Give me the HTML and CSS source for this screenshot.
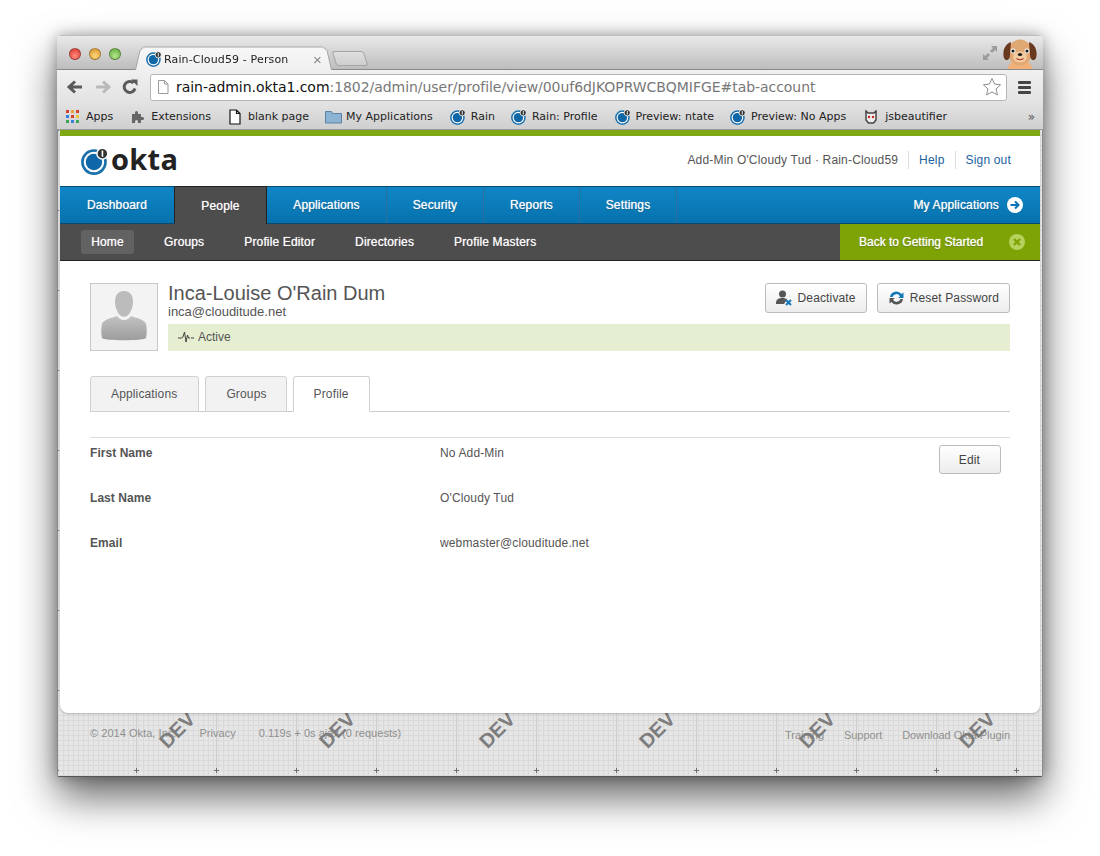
FILE: index.html
```html
<!DOCTYPE html>
<html lang="en">
<head>
    <meta charset="UTF-8">
    <title>Rain-Cloud59 - Person</title>
    <link rel="stylesheet" href="styles.css">
</head>
<body>
<svg class="defs" width="0" height="0">
    <symbol id="okta" viewBox="0 0 16 16">
        <circle cx="7.4" cy="8.600" r="6.600" fill="#fff" stroke="#1a70ad" stroke-width="1.500"/>
        <circle cx="7.4" cy="8.600" r="4.700" fill="#0f67a8"/>
        <circle cx="12.2" cy="3.800" r="3.100" fill="#333" stroke="#fff" stroke-width=".8"/>
        <rect x="11.800" y="2" width=".9" height="3.600" fill="#fff"/>
    </symbol>
</svg>

<div class="window">
    <div class="titlebar">
        <div class="lights">
            <span class="light red"></span>
            <span class="light yellow"></span>
            <span class="light green"></span>
        </div>
        <div class="tab">
            <svg class="fav"><use href="#okta"/></svg>
            <span class="tab-title">Rain-Cloud59 - Person</span>
            <span class="tab-close">×</span>
        </div>
        <div class="newtab"></div>
        <svg class="fullscreen" width="16" height="16" viewBox="0 0 16 16">
            <path d="M9 1h6v6l-2-2-3 3-2-2 3-3zM7 15H1V9l2 2 3-3 2 2-3 3z" fill="#9b9b9b"/>
        </svg>
        <svg class="avatar" width="34" height="30" viewBox="0 0 34 30">
            <path d="M5 30c0-6 5-8 12-8s12 2 12 8z" fill="#f0b27a"/>
            <ellipse cx="17" cy="13.500" rx="12" ry="13" fill="#e0a873"/>
            <path d="M8 3C2 5-1 12 1 19c2 4 6 2 6-3zM26 3c6 2 9 9 7 16-2 4-6 2-6-3z" fill="#68391f"/>
            <ellipse cx="17" cy="18" rx="7" ry="5.500" fill="#f3cba0"/>
            <circle cx="10" cy="12" r="2.500" fill="#fff"/><circle cx="24" cy="12" r="2.500" fill="#fff"/>
            <circle cx="10" cy="12" r="1.600" fill="#1c1c1c"/><circle cx="24" cy="12" r="1.600" fill="#1c1c1c"/>
            <ellipse cx="17" cy="15.500" rx="2.200" ry="1.500" fill="#1c1c1c"/>
            <path d="M13 19c2.500 1.500 5.500 1.500 8 0-1 3-7 3-8 0z" fill="#a8322a"/>
        </svg>
    </div>

    <div class="toolbar">
        <svg class="nav-icon" width="18" height="16" viewBox="0 0 18 16"><path d="M16 8H4M9 2.500 3 8l6 5.500" fill="none" stroke="#5a5a5a" stroke-width="3"/></svg>
        <svg class="nav-icon" width="18" height="16" viewBox="0 0 18 16"><path d="M2 8h12M9 2.500 15 8l-6 5.500" fill="none" stroke="#b9b9b9" stroke-width="3"/></svg>
        <svg class="nav-icon" width="16" height="16" viewBox="0 0 16 16"><path d="M13 9.500A5.500 5.500 0 1 1 11.500 4" fill="none" stroke="#5a5a5a" stroke-width="3"/><path d="M9 0.500h6.500V7z" fill="#5a5a5a"/></svg>
        <div class="omnibox">
            <svg class="page-icon" width="12" height="14" viewBox="0 0 12 14"><path d="M1.500.500h6l3.500 3.500v9.500h-9.500zM7.500.500V4H11" fill="#fff" stroke="#999"/></svg>
            <span class="url"><b>rain-admin.okta1.com</b>:1802/admin/user/profile/view/00uf6dJKOPRWCBQMIFGE#tab-account</span>
            <svg class="star" width="20" height="20" viewBox="0 0 20 20"><path d="m10 1.500 2.600 5.600 6 .7-4.500 4.100 1.300 6L10 15l-5.400 2.900 1.300-6L1.400 7.800l6-.7z" fill="#fff" stroke="#8c8c8c"/></svg>
        </div>
        <div class="menu"><i></i><i></i><i></i></div>
    </div>

    <div class="bookmarks">
        <span class="mark">
            <svg width="14" height="14" viewBox="0 0 14 14">
                <rect x="0" y="0" width="3" height="3" fill="#d8402f"/><rect x="5" y="0" width="3" height="3" fill="#e8a33a"/><rect x="10" y="0" width="3" height="3" fill="#d8402f"/>
                <rect x="0" y="5" width="3" height="3" fill="#3a7fd8"/><rect x="5" y="5" width="3" height="3" fill="#d8402f"/><rect x="10" y="5" width="3" height="3" fill="#e8c83a"/>
                <rect x="0" y="10" width="3" height="3" fill="#3aa655"/><rect x="5" y="10" width="3" height="3" fill="#3a7fd8"/><rect x="10" y="10" width="3" height="3" fill="#3aa655"/>
            </svg>Apps</span>
        <span class="mark m-ext">
            <svg width="14" height="14" viewBox="0 0 14 14"><path d="M1 4h3V2.500a1.500 1.500 0 0 1 3 0V4h3v3h1.500a1.500 1.500 0 0 1 0 3H10v3H7v-1.500a1.500 1.500 0 0 0-3 0V13H1z" fill="#666"/></svg>Extensions</span>
        <span class="mark m-blank">
            <svg width="12" height="16" viewBox="0 0 12 16"><path d="M1 1h6.500L11 4.500V15H1zM7.500 1v3.500H11" fill="#fff" stroke="#111" stroke-width="1.200"/></svg>blank page</span>
        <span class="mark m-folder">
            <svg width="17" height="14" viewBox="0 0 17 14"><path d="M.5 13V1.500h6l1 2h9V13z" fill="#8db3d4" stroke="#5f83a3"/></svg>My Applications</span>
        <span class="mark m-fav"><svg class="fav"><use href="#okta"/></svg>Rain</span>
        <span class="mark m-fav nudge"><svg class="fav"><use href="#okta"/></svg>Rain: Profile</span>
        <span class="mark m-fav"><svg class="fav"><use href="#okta"/></svg>Preview: ntate</span>
        <span class="mark m-fav nudge"><svg class="fav"><use href="#okta"/></svg>Preview: No Apps</span>
        <span class="mark m-js">
            <svg width="14" height="14" viewBox="0 0 14 14"><path d="M2 1l2 2h6l2-2v9l-2.500 3h-5L2 10z" fill="#eee" stroke="#444" stroke-width="1.500"/><circle cx="5" cy="7" r="1.200" fill="#c22"/><circle cx="9" cy="7" r="1.200" fill="#c22"/></svg>jsbeautifier</span>
        <span class="more">»</span>
    </div>

    <div class="page">
        <svg class="grid" width="100%" height="100%">
            <defs>
                <pattern id="gridTile" width="80" height="80" patternUnits="userSpaceOnUse" patternTransform="translate(38 -40)">
                    <rect x="40" y="0" width="1" height="80" fill="#cecece"/>
                    <rect x="40" y="38" width="1" height="5" fill="#707070"/>
                    <rect x="38" y="40" width="5" height="1" fill="#707070"/>
                </pattern>
            </defs>
            <rect width="100%" height="100%" fill="url(#gridTile)"/>
        </svg>

        <div class="card">
            <header class="top">
                <div class="logo">
                    <svg class="logo-mark"><use href="#okta"/></svg>
                    <span class="logo-text">okta</span>
                </div>
                <div class="user-links">
                    <span class="user-name">Add-Min O'Cloudy Tud · Rain-Cloud59</span>
                    <a class="link">Help</a>
                    <a class="link">Sign out</a>
                </div>
            </header>

            <nav class="mainnav">
                <a class="main-item w-dash">Dashboard</a>
                <a class="main-item active w-people">People</a>
                <a class="main-item w-apps">Applications</a>
                <a class="main-item w-sec">Security</a>
                <a class="main-item w-rep">Reports</a>
                <a class="main-item w-set">Settings</a>
                <a class="my-apps">My Applications
                    <svg width="16" height="16" viewBox="0 0 16 16"><circle cx="8" cy="8" r="8" fill="#fff"/><path d="M3.500 8h7M8 4.500 11.500 8 8 11.500" fill="none" stroke="#0b74b5" stroke-width="2"/></svg>
                </a>
            </nav>

            <nav class="subnav">
                <a class="sub-item current">Home</a>
                <a class="sub-item">Groups</a>
                <a class="sub-item">Profile Editor</a>
                <a class="sub-item">Directories</a>
                <a class="sub-item">Profile Masters</a>
                <div class="getting-started">Back to Getting Started
                    <svg width="16" height="16" viewBox="0 0 16 16"><circle cx="8" cy="8" r="8" fill="#b6d15c"/><path d="m5 5 6 6M11 5l-6 6" stroke="#7fa305" stroke-width="2.400"/></svg>
                </div>
            </nav>

            <main class="content">
                <section class="person">
                    <div class="photo">
                        <svg width="46" height="50" viewBox="0 0 46 50">
                            <defs><linearGradient id="sil" x1="0" y1="0" x2="0" y2="1"><stop offset="0" stop-color="#c2c2c2"/><stop offset="1" stop-color="#9d9d9d"/></linearGradient></defs>
                            <path d="M23 0c6 0 9 4 9 11 0 6-3 12-6 14-2 1-4 1-6 0-3-2-6-8-6-14C14 4 17 0 23 0z" fill="#bcbcbc"/>
                            <path d="M16 25c1 2 4 4 7 4s6-2 7-4c5 2 13 3 15 8 1 4 1 10 0 14-1 3-43 3-44 0-1-4-1-10 0-14 2-5 10-6 15-8z" fill="url(#sil)"/>
                        </svg>
                    </div>
                    <div class="person-main">
                        <div class="person-head">
                            <div>
                                <h1 class="person-name">Inca-Louise O'Rain Dum</h1>
                                <div class="person-mail">inca@clouditude.net</div>
                            </div>
                            <div class="actions">
                                <button class="btn">
                                    <svg width="17" height="16" viewBox="0 0 17 16"><circle cx="6.500" cy="4" r="3.500" fill="#555"/><path d="M0 13c0-4 3-5 6.500-5 2 0 3.500.5 4.500 1.500L8 14H0z" fill="#555"/><path d="m10 10 5 5M15 10l-5 5" stroke="#1278b8" stroke-width="2"/></svg>
                                    Deactivate</button>
                                <button class="btn">
                                    <svg width="17" height="16" viewBox="0 0 16 16"><path d="M1.500 7A6.500 6.500 0 0 1 13 4l2-1.500V8H9.500l2-1.500A4 4 0 0 0 4 7z" fill="#1278b8"/><path d="M14.500 9A6.500 6.500 0 0 1 3 12l-2 1.500V8h5.500l-2 1.500A4 4 0 0 0 12 9z" fill="#555"/></svg>
                                    Reset Password</button>
                            </div>
                        </div>
                        <div class="status">
                            <svg width="16" height="12" viewBox="0 0 16 12"><path d="M0 7h3.500l1.500-1 1.500-5 1.500 10 1.500-7 1 3h1.500M13 7h3" fill="none" stroke="#444"/></svg>
                            Active</div>
                    </div>
                </section>

                <div class="tabs">
                    <a class="page-tab">Applications</a>
                    <a class="page-tab">Groups</a>
                    <a class="page-tab selected">Profile</a>
                </div>

                <section class="fields">
                    <button class="btn edit">Edit</button>
                    <div class="field"><span class="field-label">First Name</span><span>No Add-Min</span></div>
                    <div class="field"><span class="field-label">Last Name</span><span>O'Cloudy Tud</span></div>
                    <div class="field"><span class="field-label">Email</span><span>webmaster@clouditude.net</span></div>
                </section>
            </main>
        </div>

        <footer class="foot">
            <div class="foot-left">
                <span>© 2014 Okta, Inc.</span>
                <span>Privacy</span>
                <span>0.119s + 0s ajax (0 requests)</span>
            </div>
            <div class="foot-right">
                <span>Training</span>
                <span>Support</span>
                <span>Download Okta Plugin</span>
            </div>
        </footer>

        <div class="devmarks">
            <span class="dev">DEV</span>
            <span class="dev">DEV</span>
            <span class="dev">DEV</span>
            <span class="dev">DEV</span>
            <span class="dev">DEV</span>
            <span class="dev">DEV</span>
        </div>
    </div>
</div>
</body>
</html>
```

FILE: styles.css
```css
* {
    box-sizing: border-box;
}
html, body {
    margin: 0;
    height: 856px;
    overflow: hidden;
    background: #fff;
}
body {
    padding: 35px 57px 0;
    font-family: "Liberation Sans", Arial, sans-serif;
    font-size: 12px;
    letter-spacing: .14px;
    color: #444;
}
a {
    text-decoration: none;
}
.defs {
    position: absolute;
}
.window {
    width: 986px;
    height: 742px;
    border-radius: 5px 5px 2px 2px;
    box-shadow: 0 20px 40px rgba(0, 0, 0, .6), 0 0 14px rgba(0, 0, 0, .3);
    overflow: hidden;
    display: flex;
    flex-direction: column;
}
.fav {
    width: 16px;
    height: 16px;
    flex: none;
}

/* browser chrome */
.titlebar {
    height: 35px;
    flex: none;
    display: flex;
    align-items: flex-end;
    padding-left: 12px;
    background: linear-gradient(#e9e9e9, #bdbdbd);
    border-bottom: 1px solid #8a8a8a;
    border-top: 1px solid #bdbdbd;
    position: relative;
}
.lights {
    display: flex;
    gap: 8px;
    align-self: flex-start;
    margin-top: 12px;
}
.light {
    width: 12px;
    height: 12px;
    border-radius: 50%;
    border: 1px solid rgba(0, 0, 0, .3);
}
.red { background: radial-gradient(circle at 50% 70%, #ff8a80, #d9342c); }
.yellow { background: radial-gradient(circle at 50% 70%, #ffd77a, #d7922a); }
.green { background: radial-gradient(circle at 50% 70%, #b5e88a, #5ca83a); }
.tab {
    width: 197px;
    height: 25px;
    margin-left: 14px;
    margin-bottom: -1px;
    padding: 3px 10px 0 11px;
    display: flex;
    align-items: center;
    position: relative;
    isolation: isolate;
}
.tab::before {
    content: "";
    position: absolute;
    inset: 0;
    z-index: -1;
    background: linear-gradient(#f7f7f7, #f0f0f0);
    border: 1px solid #a5a5a5;
    border-bottom: none;
    border-radius: 6px 6px 0 0;
    transform: perspective(60px) rotateX(8deg);
    transform-origin: bottom;
}
.tab-title {
    margin-left: 2px;
    flex: 1;
    font-family: "DejaVu Sans", sans-serif;
    font-size: 11px;
    letter-spacing: .14px;
    color: #222;
    white-space: nowrap;
}
.tab-close {
    font-size: 15px;
    color: #888;
}
.newtab {
    width: 32px;
    height: 15px;
    margin: 0 0 3px 2px;
    border: 1px solid #a5a5a5;
    border-radius: 3px;
    background: linear-gradient(#dedede, #cfcfcf);
    transform: skewX(18deg);
}
.fullscreen {
    position: absolute;
    right: 45px;
    top: 9px;
}
.avatar {
    position: absolute;
    right: 6px;
    bottom: 0;
}
.toolbar {
    height: 34px;
    flex: none;
    display: flex;
    align-items: center;
    padding: 0 11px 0 9px;
    gap: 10px;
    background: linear-gradient(#f0f0f0, #e2e2e2);
}
.omnibox {
    width: 857px;
    height: 27px;
    margin-left: 2px;
    display: flex;
    align-items: center;
    padding: 0 4px 0 6px;
    background: #fff;
    border: 1px solid #b5b5b5;
    border-radius: 3px;
}
.page-icon {
    flex: none;
}
.url {
    flex: 1;
    margin-left: 7px;
    font-family: "DejaVu Sans", sans-serif;
    font-size: 14px;
    letter-spacing: -.05px;
    color: #777;
    white-space: nowrap;
    overflow: hidden;
}
.url b {
    font-weight: normal;
    color: #111;
}
.menu {
    margin-left: 1px;
    width: 13px;
    display: flex;
    flex-direction: column;
    gap: 2px;
}
.menu i {
    height: 3px;
    background: #444;
    border-radius: 1px;
}
.bookmarks {
    height: 26px;
    flex: none;
    display: flex;
    align-items: center;
    padding: 0 8px 0 9px;
    gap: 17px;
    background: linear-gradient(#e2e2e2, #cfcfcf);
    border-bottom: 1px solid #9c9c9c;
    font-family: "DejaVu Sans", sans-serif;
    font-size: 11px;
    letter-spacing: 0;
    color: #222;
}
.mark {
    display: flex;
    align-items: center;
    gap: 6px;
    white-space: nowrap;
}
.m-ext {
    margin-left: 1px;
}
.m-blank {
    margin-left: 1px;
    gap: 7px;
}
.m-folder {
    margin-left: -1px;
    gap: 4px;
}
.m-fav {
    gap: 5px;
}
.nudge {
    margin-left: -1px;
}
.m-js {
    gap: 7px;
    margin-left: 1px;
}
.more {
    margin-left: auto;
    font-size: 12px;
    color: #555;
}

/* the app */
.page {
    flex: 1;
    min-height: 0;
    position: relative;
    padding: 0 2px;
    background-color: #e6e6e6;
    background-image:
        linear-gradient(#dadada 1px, transparent 1px),
        linear-gradient(90deg, #dadada 1px, transparent 1px);
    background-size: 5px 5px;
    border-left: 1px solid #8a8a8a;
    border-right: 1px solid #8a8a8a;
    border-bottom: 1px solid #555;
}
.grid {
    position: absolute;
    inset: 0;
}
.card {
    height: 583px;
    background: #fff;
    border-top: 6px solid #7ea814;
    border-radius: 0 0 8px 8px;
    box-shadow: 0 1px 2px rgba(0, 0, 0, .2);
    position: relative;
    z-index: 3;
}
.top {
    height: 50px;
    display: flex;
    align-items: center;
    justify-content: space-between;
    padding: 0 29px 0 21px;
}
.logo {
    display: flex;
    align-items: center;
}
.logo-mark {
    width: 28px;
    height: 28px;
}
.logo-text {
    margin-left: 2px;
    margin-top: -4px;
    font-family: "Open Sans", sans-serif;
    font-size: 29px;
    font-weight: 700;
    letter-spacing: .3px;
    line-height: 30px;
    color: #222;
}
.user-links {
    display: flex;
    align-items: center;
    margin-bottom: 2px;
    letter-spacing: .18px;
    color: #555;
}
.user-name {
    padding-right: 10px;
}
.link {
    color: #1a5f9e;
    padding: 2px 10px;
    border-left: 1px solid #ddd;
}
.link:last-child {
    padding-right: 0;
}
.mainnav {
    height: 38px;
    display: flex;
    background: linear-gradient(#1086c7, #0672ad);
    border-top: 1px solid #0a4a70;
    border-bottom: 1px solid #0a4a70;
}
.main-item, .my-apps, .sub-item, .getting-started {
    color: #fff;
    letter-spacing: .15px;
    text-shadow: 0 0 1px rgba(255, 255, 255, .8), 0 1px 1px rgba(0, 0, 0, .3);
}
.main-item {
    display: flex;
    align-items: center;
    justify-content: center;
    border-right: 1px solid #2a6f9e;
}
.w-dash { width: 115px; border-right-color: #222; }
.w-people { width: 92px; border-right-color: #222; }
.w-apps { width: 120px; }
.w-sec { width: 97px; }
.w-rep { width: 96px; }
.w-set { width: 97px; }
.main-item.active {
    margin-top: -1px;
    margin-bottom: -1px;
    background: #4d4d4d;
    border-top: 1px solid #222;
}
.my-apps {
    margin-left: auto;
    padding-right: 17px;
    display: flex;
    align-items: center;
    gap: 8px;
}
.subnav {
    height: 37px;
    display: flex;
    align-items: center;
    padding-left: 21px;
    gap: 20px;
    background: #4d4d4d;
    border-bottom: 1px solid #222;
    position: relative;
}
.sub-item {
    height: 24px;
    padding: 0 10px;
    display: flex;
    align-items: center;
    border-radius: 3px;
}
.sub-item.current {
    width: 53px;
    justify-content: center;
    background: #626262;
}
.getting-started {
    margin-left: auto;
    width: 200px;
    height: 36px;
    align-self: flex-start;
    padding: 0 15px 0 19px;
    display: flex;
    align-items: center;
    justify-content: space-between;
    background: #7ea305;
    letter-spacing: 0;
}
.content {
    padding: 22px 30px 0;
}
.person {
    display: flex;
    gap: 10px;
}
.photo {
    width: 68px;
    height: 68px;
    flex: none;
    display: flex;
    align-items: flex-end;
    justify-content: center;
    padding-bottom: 9px;
    background: #f3f3f3;
    border: 1px solid #c9c9c9;
}
.person-main {
    flex: 1;
}
.person-head {
    height: 41px;
    display: flex;
    justify-content: space-between;
}
.person-name {
    margin: 0;
    font-size: 20px;
    font-weight: normal;
    letter-spacing: 0;
    line-height: 20px;
    color: #555;
}
.person-mail {
    margin-top: 1px;
    font-size: 13px;
    letter-spacing: 0;
    line-height: 16px;
    color: #555;
}
.actions {
    display: flex;
    gap: 10px;
}
.btn {
    height: 30px;
    padding: 0 10px;
    display: flex;
    align-items: center;
    gap: 5px;
    font-family: inherit;
    font-size: 12px;
    letter-spacing: inherit;
    color: #444;
    background: linear-gradient(#fff, #ececec);
    border: 1px solid #bbb;
    border-radius: 3px;
}
.status {
    height: 27px;
    display: flex;
    align-items: center;
    gap: 4px;
    padding: 0 0 1px 10px;
    background: #e5eed0;
    letter-spacing: 0;
    color: #555;
}
.tabs {
    margin-top: 25px;
    height: 36px;
    display: flex;
    gap: 6px;
    border-bottom: 1px solid #ccc;
}
.page-tab {
    height: 36px;
    display: flex;
    align-items: center;
    padding: 0 20px;
    color: #555;
    background: #f2f2f2;
    border: 1px solid #d0d0d0;
    border-radius: 3px 3px 0 0;
}
.page-tab:first-child {
    padding-right: 21px;
}
.page-tab:nth-child(2) {
    padding-right: 19px;
}
.page-tab.selected {
    background: #fff;
    border-bottom-color: #fff;
}
.fields {
    margin-top: 25px;
    border-top: 1px solid #ddd;
    position: relative;
}
.edit {
    position: absolute;
    right: 9px;
    top: 7px;
    height: 29px;
    padding: 0 20px 0 19px;
}
.field {
    height: 45px;
    padding-top: 8px;
    display: flex;
    line-height: 14px;
    color: #555;
}
.field-label {
    width: 350px;
    font-weight: bold;
    letter-spacing: .05px;
}

/* footer over the grid */
.foot {
    height: 40px;
    position: relative;
    z-index: 1;
    display: flex;
    justify-content: space-between;
    padding: 14px 30px 0;
    font-size: 11px;
    letter-spacing: .04px;
    color: #8f8f8f;
}
.foot-left {
    display: flex;
    gap: 23px;
}
.foot-right {
    display: flex;
    gap: 20px;
    padding-top: 2px;
    letter-spacing: -.05px;
}
/* watermark sits under the card, the card cuts off its top */
.devmarks {
    position: absolute;
    left: 97px;
    top: 590px;
    z-index: 2;
    display: flex;
    gap: 116px;
}
.dev {
    width: 44px;
    text-align: center;
    font-size: 20px;
    font-weight: bold;
    letter-spacing: 0;
    line-height: 20px;
    color: #7d7d7d;
    transform: rotate(-45deg);
}
```
